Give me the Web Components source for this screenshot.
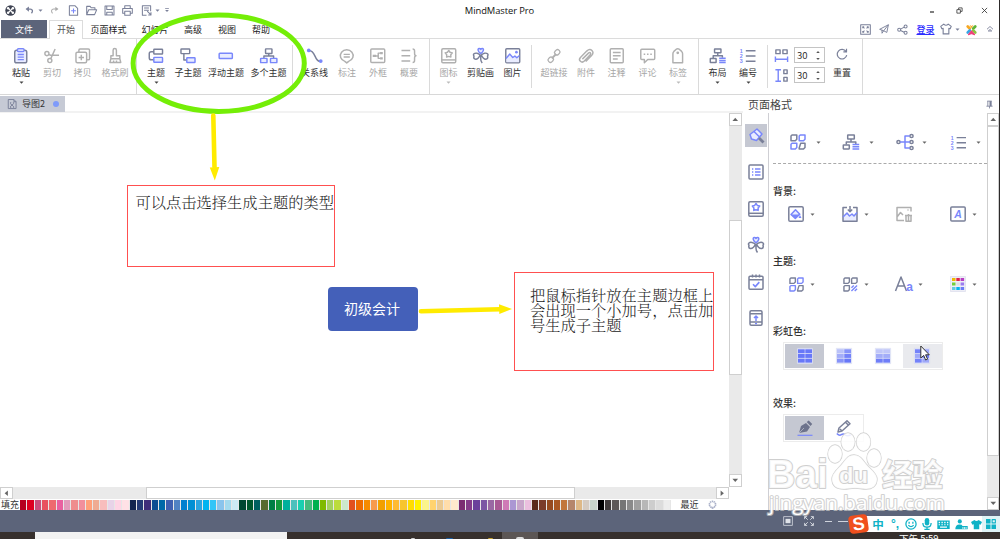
<!DOCTYPE html>
<html lang="zh-CN">
<head>
<meta charset="utf-8">
<title>MindMaster Pro</title>
<style>
    html, body { margin: 0; padding: 0; background: #fff; overflow: hidden; }
    body { font-family: "Noto Sans CJK SC", "Liberation Sans", sans-serif; font-size: 9px; color: #333; }
</style>
</head>
<body>
<mm-app></mm-app>

<script>
// 16x16 icons. b = accent stroke, bf = accent fill, af = ink fill, t = tinted fill
const ICONS = {
    logo: '<circle cx="8" cy="8" r="7.6" fill="#3e4352" stroke="none"/><path d="M5 5l6 6M11 5l-6 6" stroke="#fff" stroke-width="1.7"/><g fill="#fff" stroke="none"><circle cx="4.6" cy="4.6" r="1.8"/><circle cx="11.4" cy="4.6" r="1.8"/><circle cx="4.6" cy="11.4" r="1.8"/><circle cx="11.4" cy="11.4" r="1.8"/></g>',
    undo: '<path d="M3 5.5h6.5c4 0 5 4 2 7.5" stroke-width="2.4"/><path class="af" d="M1 5.5L7 .8v9.4z"/>',
    redo: '<path d="M13 5.5H6.5c-4 0-5 4-2 7.5" stroke-width="1.8"/><path class="af" d="M15 5.5L9.5 1.5v8z"/>',
    newdoc: '<path d="M2 1h8l4 4v10H2z"/><path class="b" d="M8 5v7M4.5 8.5h7"/>',
    open: '<path d="M1 14V2h5l1.5 2H13v3M1 14l3-7h11.5l-3 7z"/>',
    save: '<path d="M1.5 1.5h13v13h-13zM4 1.5v5h8v-5M4 14.5v-4h8v4"/>',
    print: '<path d="M4 5V1h8v4M4 12H1V5h14v7h-3M4 9h8v6H4z"/>',
    exp: '<path d="M8 15H2V1h12v8M4.500 4.500h7M4.500 7.500h7M9 9l5.500 5.500M14.500 10.500v4h-4"/>',
    paste: '<rect class="t" x="1.800" y="2.300" width="12.400" height="13" rx="2"/><rect class="b" x="4.600" y=".8" width="6.800" height="2.800" rx="1" fill="#fff"/><path class="b" d="M4.800 6.800h6.400M4.800 9.400h6.400M4.800 12h6.400"/>',
    cut: '<circle cx="3" cy="5.800" r="2.100"/><circle cx="6" cy="13" r="2.100"/><path d="M5 6.800l2 .7h8.500M7 11L11.500 1"/>',
    copy: '<rect x="1" y="4.300" width="11" height="11" rx="1.500"/><path d="M4 4V2.200C4 1.500 4.500 1 5.200 1h8.600c.7 0 1.200.5 1.200 1.200V11c0 .7-.5 1.200-1.200 1.200H12.500M6.500 7v5.600M3.700 9.800h5.600"/>',
    brush: '<path d="M6.300 8V2.300C6.300 0 9.700 0 9.700 2.300V8h3.500v3l1 4H3l1-4V8zM3.800 11h9.500M6.800 15v-2M9.800 15v-2"/>',
    topic: '<path d="M6 3.800H3.300q-2 0-2 2V10q0 2.200 2 2.200H6"/><rect x="6" y="1.200" width="9" height="5" rx=".6"/><rect class="b t" x="6" y="9.700" width="9" height="5" rx=".6"/>',
    subtopic: '<rect x="1" y="1" width="9" height="4.800" rx=".6"/><path d="M4 6v6.300h3"/><rect class="b t" x="7" y="10" width="8.500" height="5" rx=".6"/>',
    floating: '<rect class="b t" x="1.200" y="5.400" width="13.600" height="5.400" rx=".8"/>',
    multi: '<rect x="4.700" y=".9" width="6.600" height="4.700" rx=".5"/><path d="M8 5.600v2.600M3 10.600V8.200h10v2.400"/><rect class="b t" x="-.4" y="10.700" width="6.600" height="4.400" rx=".5"/><rect class="b t" x="9.800" y="10.700" width="6.600" height="4.400" rx=".5"/>',
    relation: '<path d="M2 2.500c7.500 0 5 11.500 12 11.500" stroke-width="1.500"/><circle class="bf" cx="1.800" cy="2.500" r="1.900"/><circle class="bf" cx="14.200" cy="13.500" r="1.900"/>',
    callout: '<path d="M6 13.800A6.600 6.100 0 1 1 10 13.800L8 15.400z"/><path d="M4.800 6.600h6.400M4.800 9.200h6.400"/>',
    frame: '<rect x=".8" y="1" width="14.400" height="14" rx="1"/><path class="af" d="M2.800 7h3.400v2.400H2.800zM10.400 4.200h2.800v2.200h-2.800zM10.400 9.600h2.800v2.200h-2.800z"/><path d="M6 8.200h2.500M10.500 5.300h-2v5.400h2"/>',
    summary: '<path d="M.5 2.500h9M.5 8h9M.5 13.500h9M12 1q2 0 2 2v2.500q0 2.500 1.500 2.500-1.500 0-1.500 2.500V13q0 2-2 2"/>',
    mark: '<rect x=".8" y=".8" width="14.400" height="14.400" rx="1.200"/><path d="M.8 12.300h14.400"/><path class="b" d="M8 2.500l1.300 1.900 2.400.6-1.600 1.900.1 2.500L8 8.700l-2.200.7.1-2.500L4.300 5l2.400-.6z"/>',
    clover: '<path class="b t" d="M8 5.800C5 3.700 4.400.8 6.300.6 7.300.5 8 1.500 8 1.500S8.700.5 9.700.6C11.600.8 11 3.700 8 5.800z"/><path d="M7.200 7C5.500 5.500 2.500 4.600 1 6c-1.200 1.200 0 2.200 0 2.200s-.8 2.700 1.200 3.300S7.200 9 7.200 7zM8.800 7c1.700-1.500 4.700-2.400 6.200-1 1.200 1.200 0 2.200 0 2.200s.8 2.700-1.200 3.300S8.800 9 8.800 7zM8 7v4.500q0 2 1.500 4"/>',
    image: '<rect x=".8" y=".8" width="14.400" height="14.400" rx="1"/><path class="t" stroke="none" d="M1.500 10.800L5 6.300l3 3.500 2.200-1.500 2 1.800 2.300-1.500v6h-13z"/><path class="b" d="M1 10.800L5 6.300l3 3.500 2.200-1.500 2 1.800 2.800-2.300"/><circle class="bf" cx="11.800" cy="4.300" r="1.400"/>',
    link: '<rect x="8.600" y="1.200" width="6.200" height="5.200" rx="2.200" transform="rotate(-45 11.700 3.800)"/><rect x="1.200" y="9.600" width="6.200" height="5.200" rx="2.200" transform="rotate(-45 4.300 12.200)"/><path d="M5.500 10.700l5-5" stroke-width="2.200"/>',
    clip: '<path d="M4.500 11.500l6.300-6.200c1.500-1.500 3.200.2 1.800 1.700L6.500 13.500c-2.700 2.700-6.700-.8-4-3.800L9 3.200c4.200-4 8.500.8 5 4.500L8 14"/>',
    note: '<rect x="1.300" y=".8" width="13.400" height="14.400" rx="1"/><path d="M4 4.600h8M4 8h8M4 11.400h5"/>',
    comment: '<path d="M1.800 1.200h12.400q1 0 1 1v8.600q0 1-1 1H8l-3.500 3.400v-3.400H1.800q-1 0-1-1V2.200q0-1 1-1z"/><path d="M3.800 6.500h1.600M7.200 6.500h1.600M10.600 6.500h1.600" stroke-width="1.700"/>',
    tag: '<path d="M3 15.200V6q0-1.500 1-2.500L6.500 1.200q1.500-.9 3 0L12 3.500q1 1 1 2.500v9.200z"/><circle cx="8" cy="5" r=".7"/>',
    layout: '<rect x="4.700" y="1" width="6.600" height="4" rx=".3"/><path d="M8 5v3M3.300 10.500V8h9.500v2"/><rect x=".3" y="10.900" width="6" height="4" rx=".3"/><path class="b" d="M9.500 10.500h6.700M9.500 12.800h6.700M9.500 15h6.700"/>',
    number: '<path d="M6 2.800h10M6 8.200h10M6 13.600h10"/><text x="-.2" y="5" class="bf" font-size="5.500" font-weight="700">1</text><text x="-.2" y="10.300" class="bf" font-size="5.500" font-weight="700">2</text><text x="-.2" y="15.700" class="bf" font-size="5.500" font-weight="700">3</text>',
    hgap: '<path d="M2 2h4.500v4H2zM9.500 2H14v4H9.500z"/><path class="b" d="M1.500 9v6M14.500 9v6M2 12h12"/>',
    vgap: '<path class="b" d="M1.500 1.800h6M1.500 14.200h6M4.500 2v12"/><path d="M10.500 2H14v4h-3.500zM10.500 10H14v4h-3.500z"/>',
    reset: '<path d="M13.300 4.600a6.400 6.400 0 1 0 1 5M14 1v4.200H9.800" stroke-width="1.600"/>',
    caret: '<path class="af" d="M1.500 5h13L8 12z"/>',
    caretbar: '<path class="af" d="M3 3h10v2.200H3zM3 8h10l-5 5z"/>',
    up: '<path class="af" d="M1 12L8 4l7 8z"/>',
    down: '<path class="af" d="M1 4h14L8 12z"/>',
    left: '<path class="af" d="M12 1v14L4 8z"/>',
    right: '<path class="af" d="M4 1v14l8-7z"/>',
    min: '<path d="M4 12h8" stroke-width="2.500"/>',
    restore: '<path d="M2 6h8v8H2zM6 6V2h8v8h-4" stroke-width="1.800"/>',
    close: '<path d="M2 2l12 12M14 2L2 14" stroke-width="1.900"/>',
    full: '<rect x="1" y="1" width="14" height="14"/><path d="M4 4l2.500 2.500M12 4L9.500 6.500M4 12l2.500-2.500M12 12L9.500 9.500M4 6V4h2M10 4h2v2M4 10v2h2M10 12h2v-2"/>',
    send: '<path d="M1 8.500L15 1.200l-2.500 12.300-5-2.700zM15 1.200l-7.500 9.600-2.700 4V9.500"/>',
    share: '<circle cx="3.200" cy="8.500" r="2.200"/><circle cx="12.500" cy="3.500" r="2.200"/><circle cx="12.500" cy="12.800" r="2.200"/><path d="M5.200 7.500l5.300-3M5.200 9.500l5.300 2.500"/>',
    shirt: '<path d="M5 1.500L1 4.500l1.500 3.200 1.700-.5V14.500h7.600V7.200l1.700.5L15 4.500l-4-3Q8 4.500 5 1.500z"/>',
    brand: '<g fill="none" stroke-width="4" stroke-linecap="round"><path d="M2.500 3.500l3 3" stroke="#f7a823"/><path d="M13.500 3.500l-3 3" stroke="#5fb336"/><path d="M2.500 12.500l3-3" stroke="#39a6e6"/><path d="M13.500 12.500l-3-3" stroke="#8bc53f"/></g><path d="M5 1l3 2 3-2-3 5z" fill="#f7a823" stroke="none"/><path d="M3.500 15.500L8 10l4.500 5.500L8 14z" fill="#ef3f7b" stroke="#ef3f7b"/>',
    collapse: '<path d="M2 8.500L8 3l6 5.500M4.500 12L8 9l3.500 3H4.500" stroke-width="1.800"/>',
    doc: '<path d="M2 .8h9l3.500 3.500v11H2zM11 .8v3.500h3.500M5 7l6 5.500M11 7l-6 5.500M4.800 6h2M9.500 6h2M4.800 13.300h2M9.500 13.300h2"/>',
    pin: '<path d="M4 2h8M5 2v9M11 2v9M2.500 11h11M8 11v4"/><path class="af" d="M8 2h3v9H8z"/>',
    paint: '<path class="b t" d="M2 6.500L9 1l5 5-5.500 6.500L3.500 11zM6 3.500l6 6"/><path d="M11 10l4.500 4.500" stroke-width="2.800"/>',
    outline: '<rect x="1" y="1" width="14" height="14" rx="1"/><path class="b" d="M4 5h1.300M4 8h1.300M4 11h1.300M7 5h5.500M7 8h5.500M7 11h5.500" stroke-width="1.500"/>',
    task: '<rect x="1" y="2.300" width="14" height="13" rx="1"/><path d="M1 5.800h14M4.500.5v3M8 .5v3M11.500.5v3"/><path class="b" d="M5 10.300l2.300 2.300 4-4.500" stroke-width="1.600"/>',
    page: '<rect x="2" y=".8" width="12" height="14.400" rx="1.200"/><path d="M2 3.800h12M2 12h12"/><path class="b" d="M8 11V6.500M6 8l2-2 2 2"/><path class="bf" d="M7 13h2v1.200H7z"/>',
    tiles: '<path d="M2 1h4.800v4.300L5.300 6.800H1V2zM9.200 14l1.500-4.800H15v4.300L13.500 15H9.200z"/><path class="b" d="M10.200 1H15v4.300l-1.500 1.500H9.200V2zM2 9.200h4.800v4.300L5.300 15H1v-4.800z"/>',
    tiles2: '<path d="M2 1h4.800v4.300L5.300 6.800H1V2zM10.200 1H15v4.300l-1.500 1.500H9.200V2zM2 9.200h4.800v4.300L5.300 15H1v-4.800z"/><path class="b" d="M9 11.500l2.500-2.500M9 15l6-6M12.500 15l2.500-2.500"/>',
    branch: '<circle cx="1.500" cy="8" r="1.600"/><circle cx="14.500" cy="2" r="1.600"/><circle cx="14.500" cy="8" r="1.600"/><circle cx="14.500" cy="14" r="1.600"/><path class="b" d="M3 8h10M12.800 2H8v12h4.800"/>',
    bucket: '<rect x=".8" y=".8" width="14.400" height="14.400" rx="1.300"/><path class="b t" d="M3 8.500L7.500 3.800l4.300 4.400-4.500 4.200z"/><path class="bf" d="M3 8.500h8.500l-4.200 4zM12 9l1.500 3h-3z"/>',
    insertpic: '<path class="t" stroke="none" d="M1 11l4-4 2.500 3L10 8l2 2 3-3.500V15H1z"/><path d="M5 1.500H1v13.700h14V1.500h-4M8 0v5.500M5.800 3.500L8 5.700l2.200-2.200"/><path class="b" d="M1 11l4-4 2.500 3L10 8l2 2 3-3.500"/>',
    delpic: '<path d="M8 14.500H1V1.500h14v4M1 11l3.500-4.500L7 9M9 9.500h7M10 10v5.300h5V10M12.500 8v7M11.500 4h1"/>',
    watermark: '<rect x=".8" y="1" width="14.400" height="14" rx="1"/><text x="4.300" y="12" class="bf" font-size="10.500" font-weight="700" font-style="italic">A</text>',
    font: '<path d="M-.5 15L5 1l5.500 14M1.500 10h7"/><text x="10.200" y="15" class="bf" font-size="12" font-weight="700">a</text>',
    colors: '<rect x=".5" y=".5" width="15" height="15" fill="#eeeef6" stroke="#d6d9ea" stroke-width=".6"/><g stroke="none"><path fill="#f0b900" d="M2 2h3.500v3H2z"/><path fill="#e0244c" d="M6.300 2h3.500v3H6.300z"/><path fill="#b83ec2" d="M10.600 2h3.500v3h-3.500z"/><path fill="#71cf3b" d="M2 6.500h3.500v3H2z"/><path fill="#dbe0e5" d="M6.300 6.500h3.500v3H6.300z"/><path fill="#9b7cf0" d="M10.600 6.500h3.500v3h-3.500z"/><path fill="#62cbe0" d="M2 11h3.500v3H2z"/><path fill="#00b5f0" d="M6.300 11h3.500v3H6.300z"/><path fill="#6c7cf5" d="M10.600 11h3.500v3h-3.500z"/></g>',
    pen: '<path fill="#6d738c" stroke="none" d="M2 13L4 6l5-3 4 4-3 4.500zM9.700 2l2-1.500 3.500 3.500-1.700 2z"/><path d="M2 13l5-5" stroke="#c3c6d1" stroke-width=".7"/><path class="b" d="M.5 15.300h15" stroke-width="1.200"/>',
    pencil: '<path d="M2 12l1-4L11 .8l3 3L6 11zM9.500 2.300l3 3M4 9l2 2"/><path class="b" d="M.8 13.500q2.500 2.700 4.500 1.200t4 .3 5.700-.3"/>',
    gear: '<circle cx="8" cy="8" r="5.500" stroke-dasharray="2.400 1" stroke-width="3"/><path d="M6 13l2 3 2-3"/>',
    fit: '<rect x="1" y="1" width="14" height="14" stroke-width="1.200"/><path class="af" d="M4 4.500h8v7H4z"/>',
    expand: '<path d="M1 5V1h4M11 1h4v4M15 11v4h-4M5 15H1v-4M1 1l5 5M15 1l-5 5M15 15l-5-5M1 15l5-5" stroke-width="1.400"/>',
    smile: '<circle cx="8" cy="8" r="6.800" stroke-width="1.700"/><path d="M5.500 5v2.500M10.500 5v2.500M4.500 9.500q3.500 4 7 0" stroke-width="1.700"/>',
    mic: '<rect class="af" x="5" y="0" width="6" height="10" rx="3"/><path d="M2.500 6.500c0 7.500 11 7.500 11 0M8 12v4M4.500 15.300h7" stroke-width="1.700"/>',
    keyboard: '<path class="af" fill-rule="evenodd" d="M-1 2h18v12.500H-1zM1 4v2h2V4zM5 4v2h2V4zM9 4v2h2V4zM13 4v2h2V4zM1 7.500v1.500h2V7.500zM5 7.500v1.500h2V7.500zM9 7.500v1.500h2V7.500zM13 7.500v1.500h2V7.500zM3 11v1.700h10V11z"/>',
    person: '<circle class="af" cx="5.500" cy="3.500" r="3"/><path class="af" d="M-1 15q0-7 6-7 4 0 4.500 2H17v5z"/><path d="M10 12v2M12.300 12v2M14.600 12v2" stroke="#fff"/>',
    shirtfill: '<path class="af" d="M5 1.500L0 4.500l2 4 2-.8V15h8V7.700l2 .8 2-4-5-3Q8 4 5 1.500z"/>',
    apps: '<path class="af" d="M0 0h7.200v7.200H0zM0 8.800h7.200V16H0zM8.800 8.800H16V16H8.800z"/><path d="M9.800 1h5.200v5.200H9.800z" stroke-width="1.700"/>'
};

// 2x3 rainbow grids: one opacity for each cell
const RAINBOW = {
    all: [1, 1, 1, 1, 1, 1],
    column: [.3, .75, .5, .9, .75, 1],
    row: [.25, .25, .5, .5, .95, .95],
    mixed: [.9, .55, .55, .9, .9, .55]
};
for (const key of Object.keys(RAINBOW)) {
    ICONS['rainbow-' + key] = '<rect x=".3" y=".3" width="15.400" height="15.400" fill="#dfe2fa" stroke="#d2d6ee" stroke-width=".4"/>' +
        RAINBOW[key].map((o, i) => `<rect x="${1 + (i % 2) * 7.3}" y="${1.3 + Math.floor(i / 2) * 4.7}" width="6.700" height="3.900" fill="#6878f8" stroke="none" opacity="${o}"/>`).join('');
}

function render(el, css, html) {
    const template = document.createElement('template');
    template.innerHTML = `<style>:host { box-sizing: border-box; } * { box-sizing: border-box; } ${css}</style>${html}`;
    el.attachShadow({ mode: 'open' }).appendChild(template.content.cloneNode(true));
}

// short form for an icon centred in a fixed-width cell
const cell = (name, width, size = 12) => `<mm-icon name="${name}" size="${size}" style="width:${width}px"></mm-icon>`;

class MmIcon extends HTMLElement {
    connectedCallback() {
        if (this.shadowRoot) return;
        const size = this.getAttribute('size') || 16;
        render(this, `
            :host { display: inline-flex; align-items: center; justify-content: center; flex: none; }
            svg { display: block; flex: none; overflow: visible; fill: none; stroke: var(--ink, #7a8099); stroke-width: 1.5; stroke-linejoin: round; }
            .b { stroke: var(--accent, #7987fb); }
            .t { fill: var(--tint, #e9ecff); }
            .bf { fill: var(--accent, #7987fb); stroke: none; }
            .af { fill: var(--ink, #7a8099); stroke: none; }
            text { font-family: "Liberation Sans", sans-serif; }
        `, `<svg width="${size}" height="${size}" viewBox="0 0 16 16">${ICONS[this.getAttribute('name')]}</svg>`);
    }
}

class MmTitleBar extends HTMLElement {
    constructor() {
        super();
        render(this, `
            :host { display: grid; grid-template-columns: 1fr auto 1fr; height: 20px; align-items: center; }
            .quick, .window { display: flex; align-items: center; height: 18px; }
            .window { justify-content: flex-end; padding-right: 4px; --ink: #333; }
            .title { font: 9.400px "Open Sans", sans-serif; color: #111; letter-spacing: -.08px; }
        `, `
            <div class="quick">
                ${cell('logo', 20, 11)}${cell('undo', 18, 9)}${cell('caret', 4, 5)}
                <span style="--ink:#aaa;display:flex">${cell('redo', 24, 9)}</span>
                ${cell('newdoc', 14, 11)}${cell('open', 22, 11)}${cell('save', 14, 11)}${cell('print', 22, 11)}${cell('exp', 16, 11)}${cell('caret', 6, 5)}${cell('caretbar', 14, 6)}
            </div>
            <div class="title">MindMaster Pro</div>
            <div class="window">${cell('min', 25, 8)}${cell('restore', 30, 7)}${cell('close', 21, 7)}</div>
        `);
    }
}

class MmTabBar extends HTMLElement {
    constructor() {
        super();
        render(this, `
            :host { display: flex; height: 19px; align-items: stretch; border-bottom: 1px solid #dcdcdc; padding-left: 1px; }
            span { display: flex; align-items: center; justify-content: center; white-space: nowrap; color: #222; padding-top: 1px; }
            .file { background: #5c647a; color: #fff; width: 46px; }
            .active { width: 34px; margin: 0 0 -1px 2px; border: 1px solid #dcdcdc; border-bottom: 0; background: #fff; color: #555; padding-top: 0; }
            .right { margin-left: auto; display: flex; align-items: center; padding-right: 1px; }
            .login { width: 25px; color: #2b2bff; font-weight: 500; text-decoration: underline; }
        `, `
            <span class="file">文件</span>
            <span class="active">开始</span>
            <span style="width:51px">页面样式</span>
            <span style="width:42px">幻灯片</span>
            <span style="width:34px">高级</span>
            <span style="width:34px">视图</span>
            <span style="width:34px">帮助</span>
            <div class="right">
                ${cell('full', 19, 11)}${cell('send', 17, 10)}${cell('share', 21, 11)}
                <span class="login">登录</span>
                ${cell('shirt', 15, 12)}${cell('caret', 9, 5)}${cell('brand', 19, 11)}${cell('collapse', 17, 8)}
            </div>
        `);
    }
}

class MmTool extends HTMLElement {
    connectedCallback() {
        if (this.shadowRoot) return;
        const icon = this.getAttribute('icon');
        render(this, `
            :host { display: flex; flex-direction: column; align-items: center; flex: none; padding-top: 9px; color: #333; }
            :host([disabled]) { color: #a6a6a6; --ink: #b0b0b0; --accent: #b0b0b0; --tint: transparent; }
            .icon { height: 16px; }
            .label { height: 14px; line-height: 14px; margin-top: 2px; white-space: nowrap; }
            .caret { --ink: #444; }
            :host([disabled]) .caret { --ink: #bbb; }
        `, `
            <mm-icon class="icon" name="${icon}" size="${this.getAttribute('size') || 15.5}"></mm-icon>
            <div class="label"><slot></slot></div>
            ${this.hasAttribute('menu') ? '<mm-icon class="caret" name="caret" size="5"></mm-icon>' : ''}
        `);
    }
}

class MmSpin extends HTMLElement {
    constructor() {
        super();
        render(this, `
            :host { display: flex; align-items: center; width: 31px; height: 16px; border: 1px solid #c4c4c4; padding: 0 4px 0 2px; font-size: 9.500px; color: #333; justify-content: space-between; }
            div { display: flex; flex-direction: column; gap: 3px; --ink: #555; }
        `, `<slot></slot><div><mm-icon name="up" size="4"></mm-icon><mm-icon name="down" size="4"></mm-icon></div>`);
    }
}

class MmRibbon extends HTMLElement {
    constructor() {
        super();
        const tool = (icon, label, w, flags = '') => `<mm-tool icon="${icon}" style="width:${w}px" ${flags}>${label}</mm-tool>`;
        const sep = (before, after, cls = '') => `<i class="${cls}" style="margin-left:${before}px;margin-right:${after}px"></i>`;
        render(this, `
            :host { display: flex; height: 56px; border-bottom: 1px solid #d8d8d8; padding-left: 6px; }
            i { width: 1px; background: #dadada; flex: none; }
            i.short { margin-top: 6px; margin-bottom: 6px; }
            .gaps { display: grid; grid-template-columns: 14px 31px; column-gap: 6px; row-gap: 4px; align-content: start; padding-top: 8px; align-items: center; }
        `, `
            ${tool('paste', '粘贴', 30, 'menu')}${tool('cut', '剪切', 32, 'disabled')}${tool('copy', '拷贝', 29, 'disabled')}${tool('brush', '格式刷', 36, 'disabled')}
            ${sep(3, 3)}
            ${tool('topic', '主题', 32, 'menu')}${tool('subtopic', '子主题', 32)}${tool('floating', '浮动主题', 44)}${tool('multi', '多个主题', 41)}
            ${sep(3, 3, 'short')}
            ${tool('relation', '关系线', 37)}${tool('callout', '标注', 28, 'disabled')}${tool('frame', '外框', 34, 'disabled')}${tool('summary', '概要', 28, 'disabled')}
            ${sep(6, 3)}
            ${tool('mark', '图标', 31, 'disabled menu')}${tool('clover', '剪贴画', 33)}${tool('image', '图片', 31)}
            ${sep(3, 5, 'short')}
            ${tool('link', '超链接', 34, 'disabled size="14"')}${tool('clip', '附件', 30, 'disabled')}${tool('note', '注释', 31, 'disabled')}${tool('comment', '评论', 31, 'disabled')}${tool('tag', '标签', 30, 'disabled menu')}
            ${sep(5, 3)}
            ${tool('layout', '布局', 31, 'menu')}${tool('number', '编号', 30, 'menu')}
            ${sep(4, 6, 'short')}
            <div class="gaps">
                <mm-icon name="hgap" size="15"></mm-icon><mm-spin>30</mm-spin>
                <mm-icon name="vgap" size="15"></mm-icon><mm-spin>30</mm-spin>
            </div>
            <mm-tool icon="reset" size="12" style="width:34px;padding-top:7px"><span style="position:relative;top:2px">重置</span></mm-tool>
            ${sep(3, 0)}
        `);
    }
}

class MmScrollbar extends HTMLElement {
    connectedCallback() {
        if (this.shadowRoot) return;
        const [before, thumb] = this.getAttribute('range').split(' ');
        const horizontal = this.hasAttribute('horizontal');
        render(this, `
            :host { display: flex; flex: none; flex-direction: column; width: 13px; background: #eaeaea; --ink: #666; }
            :host([horizontal]) { flex-direction: row; width: auto; height: 12px; }
            .btn { width: 100%; height: 13px; flex: none; background: #fff; border: 1px solid #cfcfcf; justify-content: center; }
            :host([horizontal]) .btn { width: 13px; height: 12px; }
            .thumb { background: #fff; border: 1px solid #cfcfcf; flex: none; }
            .rest { flex: 1; }
        `, `
            <mm-icon class="btn" name="${horizontal ? 'left' : 'up'}" size="6.500"></mm-icon>
            <div style="flex:none;${horizontal ? 'width' : 'height'}:${before}px"></div>
            <div class="thumb" style="${horizontal ? 'width' : 'height'}:${thumb}px"></div>
            <div class="rest"></div>
            <mm-icon class="btn" name="${horizontal ? 'right' : 'down'}" size="6.500"></mm-icon>
        `);
    }
}

class MmCanvas extends HTMLElement {
    constructor() {
        super();
        // nodes sit on a free canvas
        render(this, `
            :host { display: block; position: relative; flex: 1; background: #fff; overflow: hidden; }
            .note { position: absolute; border: 1px solid #ff5050; overflow: hidden; font-size: 15.270px; font-weight: 300; line-height: 15.400px; color: #222; white-space: nowrap; font-family: "Noto Serif CJK SC", "Noto Sans CJK SC", serif; }
            .topic { position: absolute; left: 328px; top: 174px; width: 90px; height: 44px; border-radius: 4px; background: #4460b9; color: #fff; font-size: 14px; display: flex; align-items: center; justify-content: center; padding: 0 2px 2px 0; }
        `, `
            <div class="note" style="left:127px;top:72px;width:208px;height:82px;padding:8px 0 0 7.500px">可以点击选择生成主题的类型</div>
            <div class="topic">初级会计</div>
            <div class="note" style="left:514px;top:159px;width:200px;height:99px;padding:13.500px 0 0 15px">把鼠标指针放在主题边框上<br>会出现一个小加号，点击加<br>号生成子主题</div>
        `);
    }
}

class MmPalette extends HTMLElement {
    constructor() {
        super();
        const colors = ('b5001f dd0020 c94f7c e8515f ee6a6f e960a0 e29bbc ef8d8d f28f9c ffa07a efab92 f8bdbd e8d3e8 ffd5e5 ffe1e6 ' +
            '13254f 243a75 3f2d7a 0b4d92 0069a8 4060b0 5182c3 0080cf 0090d4 2ba5e0 00b4f0 33c5f7 8ac4ec a3daee cceaf4 ' +
            '004631 00572d 006060 566b2e 007f44 159a3c 00b09c 4cc0bd 1acfb0 45ba7e 00b050 7fba00 a2d160 bcdc3c cce8cc ' +
            'e2501e ee6c00 f68b00 f79a4e f2a000 ffb200 ffba33 f7c52e ffdc00 fff000 fbf48a ffd36f ebca92 ffddaa ffe9cd ' +
            '7b2c72 853b8a 6b409b 7b57a4 9a69a4 a95a95 cf7ab6 ab97d3 c8a6cb ebbfdf ' +
            '5a2a1c 7a3b2a 964a1f a95722 c2763c b5866c deb887 d5cbc2 c9d5ca ' +
            '000000 413c3c 5c5757 757575 8a8a8a a0a0a0 b7b7b7 cdcdcd dcdcdc ededed').split(' ');
        render(this, `
            :host { display: flex; height: 11px; align-items: center; background: #fff; line-height: 11px; color: #333; overflow: hidden; }
            .label { width: 20px; padding-left: 1px; }
            .swatches { display: flex; width: 650.600px; height: 10px; }
            .swatches i { flex: 1; border-right: 1px solid #e6e6e6; }
            .recent { margin-left: 10px; width: 27px; }
            mm-icon { --ink: #a9b0c8; }
        `, `
            <span class="label">填充</span>
            <div class="swatches">${colors.map(c => `<i style="background:#${c}"></i>`).join('')}</div>
            <span class="recent">最近</span>
            <mm-icon name="gear" size="9"></mm-icon>
        `);
    }
}

class MmEditor extends HTMLElement {
    constructor() {
        super();
        render(this, `
            :host { display: flex; flex-direction: column; width: 743px; flex: none; }
            .docs { display: flex; height: 18px; padding-top: 1px; border-bottom: 2px solid #f2f2f2; }
            .doc { display: flex; align-items: center; width: 65px; background: #c6cad5; padding-left: 7px; gap: 5px; margin-bottom: -1px; color: #333; }
            .dot { width: 6px; height: 6px; border-radius: 50%; background: #7f9bfa; margin-left: 3px; }
            .work { display: flex; height: 374px; width: 742px; }
            .hs { margin-right: 14px; }
        `, `
            <div class="docs"><div class="doc"><mm-icon name="doc" size="10"></mm-icon>导图2<span class="dot"></span></div></div>
            <div class="work"><mm-canvas></mm-canvas><mm-scrollbar range="94 155"></mm-scrollbar></div>
            <mm-scrollbar class="hs" horizontal range="133 429"></mm-scrollbar>
            <mm-palette></mm-palette>
        `);
    }
}

class MmSection extends HTMLElement {
    connectedCallback() {
        if (this.shadowRoot) return;
        render(this, `
            :host { display: block; }
            .label { height: 20px; line-height: 20px; font-size: 10px; font-weight: 500; color: #333; margin-bottom: 3px; }
            :host([boxed]) .label { margin-bottom: 1px; }
        `, `<div class="label">${this.getAttribute('label')}</div><slot></slot>`);
    }
}

class MmFormatPanel extends HTMLElement {
    constructor() {
        super();
        const pick = (icon, caret = true, size = 16) => `<div class="pick"><mm-icon name="${icon}" size="${size}"></mm-icon>${caret ? '<mm-icon class="caret" name="caret" size="5"></mm-icon>' : ''}</div>`;
        render(this, `
            :host { display: flex; flex-direction: column; width: 256px; flex: none; background: #fff; }
            header { display: flex; justify-content: space-between; align-items: center; height: 18px; padding: 1px 5px 0 5px; font-size: 11px; color: #444; }
            .body { display: flex; height: 397px; }
            nav { display: flex; flex-direction: column; align-items: center; width: 26px; flex: none; padding: 11px 0 0 1px; gap: 13.600px; border-right: 1px solid #cfcfd4; height: 100%; }
            nav mm-icon { width: 22px; height: 23px; }
            nav .on { background: #c5c8d2; }
            .content { flex: 1; min-width: 0; padding-left: 4px; }
            .row { display: flex; height: 20px; align-items: center; padding-left: 13px; }
            .pick { display: flex; align-items: center; width: 54px; flex: none; }
            .pick mm-icon { width: 20px; }
            .pick .caret { width: 12px; --ink: #666; }
            .top { height: 32px; margin-top: 13px; padding-left: 15px; }
            .top .pick { width: 53.400px; }
            .top .caret { width: 20px; }
            hr { border: 0; border-top: 1px dashed #aaa; margin: 5px 0 17px; }
            .gray { --ink: #b0b0b0; }
            .options { display: flex; width: 160px; height: 28px; margin-left: 10px; padding: 1px; border: 1px solid #ececec; }
            .options.two { width: 81px; }
            .options mm-icon { width: 39.200px; }
            .options .on { background: #c5c8d2; }
            .options .hover { background: #e9eaee; }
            .cursor { position: absolute; left: 920px; top: 345px; }
            mm-scrollbar { width: 12px; }
        `, `
            <header>页面格式<mm-icon name="pin" size="9"></mm-icon></header>
            <div class="body">
                <nav>
                    <mm-icon class="on" name="paint"></mm-icon>
                    <mm-icon name="outline"></mm-icon>
                    <mm-icon name="mark"></mm-icon>
                    <mm-icon name="clover"></mm-icon>
                    <mm-icon name="task"></mm-icon>
                    <mm-icon name="page"></mm-icon>
                </nav>
                <div class="content">
                    <div class="row top">${pick('tiles')}${pick('layout')}${pick('branch')}${pick('number', true, 15)}</div>
                    <hr>
                    <mm-section label="背景:">
                        <div class="row">${pick('bucket')}${pick('insertpic')}<span class="gray">${pick('delpic', false)}</span>${pick('watermark')}</div>
                    </mm-section>
                    <mm-section label="主题:" style="margin-top:27px">
                        <div class="row">${pick('tiles', true, 15)}${pick('tiles2', true, 15)}${pick('font')}${pick('colors')}</div>
                    </mm-section>
                    <mm-section boxed label="彩虹色:" style="margin-top:27px">
                        <div class="options">
                            <mm-icon class="on" name="rainbow-all"></mm-icon>
                            <mm-icon name="rainbow-column"></mm-icon>
                            <mm-icon name="rainbow-row"></mm-icon>
                            <mm-icon class="hover" name="rainbow-mixed"></mm-icon>
                        </div>
                    </mm-section>
                    <mm-section boxed label="效果:" style="margin-top:23px">
                        <div class="options two"><mm-icon class="on" name="pen"></mm-icon><mm-icon name="pencil"></mm-icon></div>
                    </mm-section>
                </div>
                <mm-scrollbar range="0 330"></mm-scrollbar>
            </div>
            <svg class="cursor" width="10" height="16" viewBox="0 0 10 16"><path d="M.8 1v12l2.900-2.600L5.600 15l2-.9-2-4.300h3.700z" fill="#fff" stroke="#333" stroke-width="1"/></svg>
        `);
    }
}

class MmStatusBar extends HTMLElement {
    constructor() {
        super();
        render(this, `
            :host { display: flex; height: 22px; background: #5c647a; padding: 0 0 0 778px; align-items: center; --ink: #dfe2e8; }
            .line { width: 10px; height: 1px; background: #cfd3dc; margin-left: 6px; }
        `, `${cell('fit', 19, 10)}${cell('expand', 24, 10)}<span class="line" style="width:7px;margin-left:4px"></span><span class="line"></span>`);
    }
}

class MmTaskbar extends HTMLElement {
    constructor() {
        super();
        render(this, `
            :host { display: flex; height: 7px; background: #37302d; overflow: hidden; align-items: flex-end; }
            .search { width: 252px; height: 7px; margin-left: 35px; background: #f2f2f2; }
            .app { height: 1px; border-radius: 3px 3px 0 0; }
            .running { width: 36px; height: 7px; margin-left: 9px; background: #5c5655; display: flex; justify-content: center; align-items: flex-end; }
            .running .app { width: 8px; height: 2px; background: #ddd; }
            .clock { margin-left: 361px; height: 7px; line-height: 12px; font-size: 9.500px; color: #fff; white-space: nowrap; }
        `, `
            <div class="search"></div>
            <div class="app" style="width:4px;margin-left:124px;background:#ccc"></div>
            <div class="app" style="width:7px;margin-left:31px;background:#1b5fa5"></div>
            <div class="app" style="width:5px;margin-left:35px;background:#c5a12c"></div>
            <div class="running"><div class="app"></div></div>
            <div class="clock">下午 5:59</div>
        `);
    }
}

class MmInputBar extends HTMLElement {
    constructor() {
        super();
        render(this, `
            :host { position: absolute; left: 849px; top: 514px; display: flex; align-items: center; height: 20px; width: 151px; --ink: #0fb2c6; color: #0fb2c6; }
            .logo { width: 19px; height: 18px; background: #f0501e; border-radius: 4px; transform: rotate(-8deg); color: #fff; font: 700 18px/18px "Liberation Sans", sans-serif; text-align: center; flex: none; z-index: 1; }
            .bar { display: flex; align-items: center; height: 16px; width: 140px; margin-left: -8px; padding-left: 8px; background: #fff; }
            .zh { width: 20px; font-size: 11.500px; line-height: 16px; font-weight: 700; text-align: center; }
            .punct { width: 14px; font: 700 12px/16px "Liberation Sans", sans-serif; text-align: center; }
            .apps { background: #dff3f6; height: 16px; }
        `, `
            <div class="logo">S</div>
            <div class="bar">
                <span class="zh">中</span><span class="punct">°,</span>
                ${cell('smile', 17, 12)}${cell('mic', 15, 12)}${cell('keyboard', 18, 11)}${cell('person', 18, 11)}${cell('shirtfill', 12, 11)}
                ${cell('apps', 18, 10).replace('<mm-icon', '<mm-icon class="apps"')}
            </div>
        `);
    }
}

class MmWatermark extends HTMLElement {
    constructor() {
        super();
        render(this, `
            :host { position: absolute; left: 764px; top: 430px; width: 190px; height: 92px; pointer-events: none; }
            svg { display: block; }
            .o { fill: #fff; fill-opacity: .85; stroke: #cfcfcf; stroke-width: 2; stroke-linejoin: round; paint-order: stroke; }
            .url { fill: #fff; stroke: #c4c4c4; stroke-opacity: .75; stroke-width: 2.200; stroke-linejoin: round; paint-order: stroke; }
            .paw { stroke-width: 1.300; }
            text { font-family: "Noto Sans CJK SC", sans-serif; }
            .latin { font-family: "Liberation Sans", sans-serif; font-weight: 700; }
        `, `
            <svg width="190" height="92" viewBox="764 430 190 92">
                <g class="o paw">
                    <ellipse cx="835" cy="454" rx="7" ry="9"/>
                    <ellipse cx="848" cy="442" rx="6.800" ry="9"/>
                    <ellipse cx="863.500" cy="442" rx="7" ry="9"/>
                    <ellipse cx="874" cy="458" rx="7" ry="9"/>
                    <path d="M854 455c6 0 9 5 12 9s11 9 11 15c0 7-5 10-11 10-4 0-7-1-11-1s-7 1-11 1c-7 0-12-3-12-10 0-6 6-10 10-15s6-9 12-9z"/>
                </g>
                <g class="o">
                    <text class="latin" x="767" y="487.500" font-size="40" textLength="61" lengthAdjust="spacingAndGlyphs">Bai</text>
                    <text class="latin" x="839" y="483" font-size="22" textLength="29" lengthAdjust="spacingAndGlyphs">du</text>
                    <text x="882" y="486" font-size="31" font-weight="700" textLength="61">经验</text>
                </g>
                <text class="url" x="769" y="510" font-size="19.500" style="font-family:'Open Sans',sans-serif" textLength="176" lengthAdjust="spacingAndGlyphs">jingyan.baidu.com</text>
            </svg>
        `);
    }
}

class MmAnnotations extends HTMLElement {
    constructor() {
        super();
        render(this, `
            :host { position: absolute; left: 0; top: 0; pointer-events: none; }
            svg { display: block; }
        `, `
            <svg width="743" height="400" fill="none">
                <ellipse cx="218.700" cy="63.200" rx="85.600" ry="48.200" stroke="#74ee07" stroke-width="5"/>
                <g stroke="#ffeb00" stroke-width="4.600" stroke-linecap="round">
                    <path d="M213.300 115.500L214.500 167"/>
                    <path d="M421 311.300L500 309.300"/>
                </g>
                <path d="M209.800 167.500l9.500-.5-4.500 13.500zM499 304.300l13 4.700-12.700 5z" fill="#ffeb00"/>
            </svg>
        `);
    }
}

class MmApp extends HTMLElement {
    constructor() {
        super();
        render(this, `
            :host { display: flex; flex-direction: column; position: relative; width: 1000px; height: 539px; background: #fff; overflow: hidden; line-height: 1.3; }
            .window { border-right: 1px solid #2d2a2a; display: flex; flex-direction: column; height: 510px; }
            .main { display: flex; flex: 1; }
        `, `
            <div class="window">
                <mm-title-bar></mm-title-bar>
                <mm-tab-bar></mm-tab-bar>
                <mm-ribbon></mm-ribbon>
                <div class="main"><mm-editor></mm-editor><mm-format-panel></mm-format-panel></div>
            </div>
            <mm-status-bar></mm-status-bar>
            <mm-taskbar></mm-taskbar>
            <mm-annotations></mm-annotations>
            <mm-watermark></mm-watermark>
            <mm-input-bar></mm-input-bar>
        `);
    }
}

customElements.define('mm-icon', MmIcon);
customElements.define('mm-title-bar', MmTitleBar);
customElements.define('mm-tab-bar', MmTabBar);
customElements.define('mm-tool', MmTool);
customElements.define('mm-spin', MmSpin);
customElements.define('mm-ribbon', MmRibbon);
customElements.define('mm-scrollbar', MmScrollbar);
customElements.define('mm-canvas', MmCanvas);
customElements.define('mm-palette', MmPalette);
customElements.define('mm-editor', MmEditor);
customElements.define('mm-section', MmSection);
customElements.define('mm-format-panel', MmFormatPanel);
customElements.define('mm-status-bar', MmStatusBar);
customElements.define('mm-taskbar', MmTaskbar);
customElements.define('mm-input-bar', MmInputBar);
customElements.define('mm-watermark', MmWatermark);
customElements.define('mm-annotations', MmAnnotations);
customElements.define('mm-app', MmApp);
</script>
</body>
</html>
